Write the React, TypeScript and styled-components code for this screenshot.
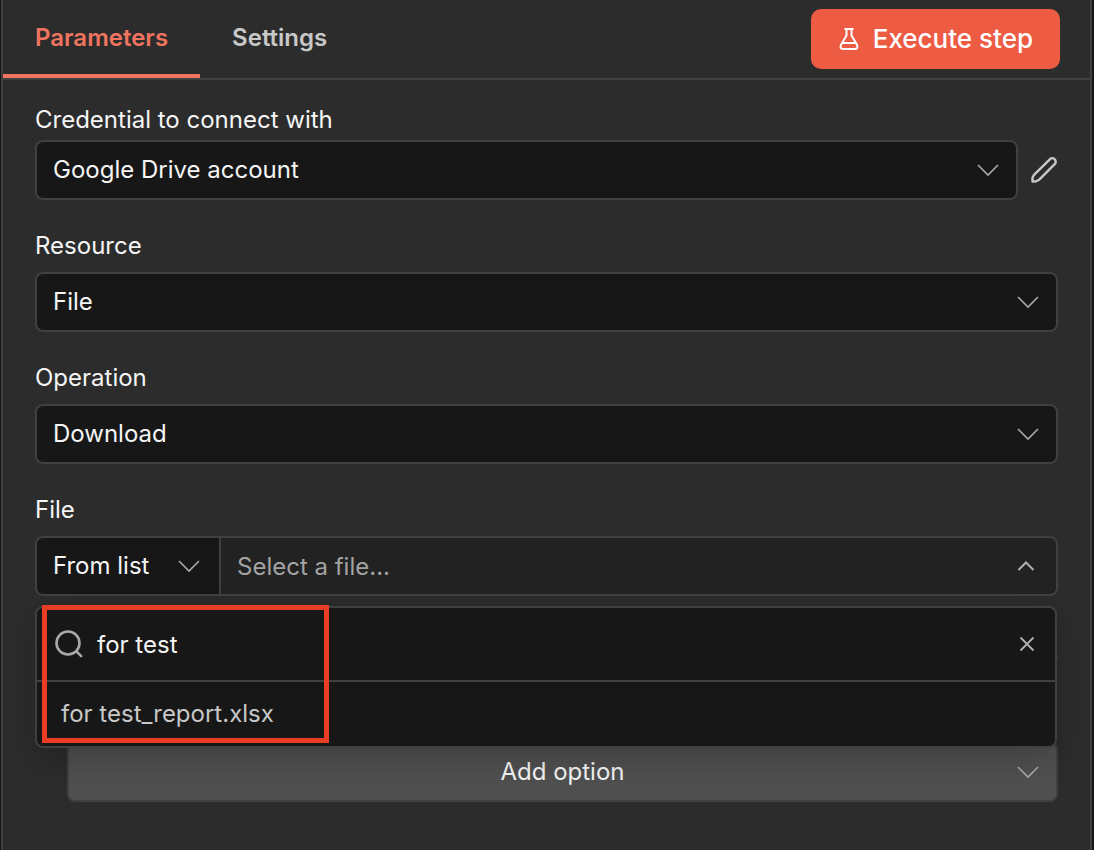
import React from "react";
import styled, { createGlobalStyle, css } from "styled-components";

const GlobalStyle = createGlobalStyle`
  *, *::before, *::after { box-sizing: border-box; }
  html, body, #root { height: 100%; }
  body {
    margin: 0;
    background: #171717;
    color: #f5f5f5;
    font-family: Inter, "Liberation Sans", sans-serif;
    font-size: 24px;
    line-height: 36px;
    overflow-x: hidden;
  }
  button, input, select { font: inherit; color: inherit; margin: 0; }
`;

const line = "#404040";

const Panel = styled.main`
  min-height: 100%;
  margin: 0 2px 0 1px;
  border: solid ${line};
  border-width: 0 2px;
  background: #2c2c2c;
`;

const TabBar = styled.header`
  display: flex;
  align-items: stretch;
  justify-content: space-between;
  height: 80px;
  border-bottom: 2px solid ${line};
`;

const Tabs = styled.nav`
  display: flex;
`;

const Tab = styled.button<{ $active?: boolean }>`
  padding: 2px 32px 0;
  border: 0;
  border-bottom: 4px solid ${(p) => (p.$active ? "#f0745f" : "transparent")};
  background: none;
  color: ${(p) => (p.$active ? "#f0745f" : "#c8c8c8")};
  font-weight: 600;
`;

const ExecuteButton = styled.button`
  display: flex;
  align-items: center;
  align-self: center;
  gap: 12px;
  height: 60px;
  margin-right: 30px;
  padding: 0 27px 0 26px;
  border: 0;
  border-radius: 10px;
  background: #ee5b43;
  color: #fff;
  font-size: 26px;
  font-weight: 500;
`;

const Form = styled.form`
  display: flex;
  flex-direction: column;
  gap: 28px;
  padding: 22px 32px 48px;
`;

const Field = styled.div<{ $tight?: boolean }>`
  display: flex;
  flex-direction: column;
  gap: ${(p) => (p.$tight ? 2 : 8)}px;
`;

const Label = styled.label`
  align-self: flex-start;
`;

const Row = styled.div`
  display: flex;
  align-items: center;
`;

const SelectWrap = styled.div`
  display: grid;
  flex: 1;
  align-items: center;

  > * { grid-area: 1 / 1; }
  > svg {
    justify-self: end;
    margin-right: 19px;
    pointer-events: none;
  }
`;

const control = css`
  height: 60px;
  border: 2px solid ${line};
  border-radius: 8px;
  background: #171717;
  outline: 0;
`;

const Select = styled.select`
  ${control}
  width: 100%;
  padding: 0 16px;
  appearance: none;
`;

const IconButton = styled.button`
  display: flex;
  padding: 0;
  border: 0;
  background: none;
  color: #c8c8c8;
`;

const EditButton = styled(IconButton)`
  margin-left: 12px;
`;

const Locator = styled.div`
  position: relative;
  display: flex;
`;

const ModeWrap = styled(SelectWrap)`
  flex: 0 0 184px;
`;

const ModeSelect = styled(Select)`
  border-right: 0;
  border-radius: 8px 0 0 8px;
`;

const FileBox = styled.div`
  ${control}
  display: flex;
  flex: 1;
  align-items: center;
  min-width: 0;
  padding-right: 21px;
  border-radius: 0 8px 8px 0;
  background: #222;
`;

const TextInput = styled.input`
  flex: 1;
  min-width: 0;
  padding: 2px 0 0;
  border: 0;
  outline: 0;
  background: none;

  &::placeholder { color: #a3a3a3; opacity: 1; }
`;

const FileInput = styled(TextInput)`
  padding-left: 16px;
`;

const Dropdown = styled.div`
  position: absolute;
  z-index: 1;
  top: 70px;
  left: 0;
  right: 1px;
  border: 2px solid ${line};
  border-radius: 8px;
  background: #171717;
  box-shadow: 0 12px 32px rgba(0, 0, 0, 0.2);
`;

const SearchRow = styled.div`
  display: flex;
  align-items: center;
  gap: 12px;
  height: 74px;
  padding: 0 20px 0 16px;
  border-bottom: 2px solid ${line};
`;

const Result = styled.button`
  display: block;
  width: 100%;
  height: 64px;
  padding: 0 24px;
  border: 0;
  background: none;
  color: #c8c8c8;
  text-align: left;
`;

const Highlight = styled.div`
  position: absolute;
  z-index: 2;
  top: 69px;
  left: 7px;
  width: 287px;
  height: 138px;
  border: 5px solid #ea3e24;
  pointer-events: none;
`;

const Options = styled.section`
  margin-top: 32px;
  padding: 84px 0 0 32px;
  border-top: 2px solid ${line};
`;

const OptionSelect = styled(Select)`
  background: #505050;
  text-align-last: center;
`;

type IconProps = { up?: boolean };

const Chevron = ({ up }: IconProps) =>
  up ? (
    <svg width="18" height="12" viewBox="0 0 18 12" fill="none" stroke="#b0b0b0" strokeWidth="2">
      <path d="M1.500 10 9 2.500 16.500 10" />
    </svg>
  ) : (
    <svg width="22" height="14" viewBox="0 0 22 14" fill="none" stroke="#a9a9a9" strokeWidth="1.600">
      <path d="M1 2 11 12 21 2" />
    </svg>
  );

const Flask = () => (
  <svg width="24" height="24" viewBox="0 0 24 24" fill="none" stroke="currentColor" strokeWidth="2">
    <path d="M7.500 2h9M9.500 2v6.500L4.200 17.500C2.800 20 3.500 22 6 22h12c2.500 0 3.200-2 1.800-4.500L14.500 8.500V2M6 16h12" />
  </svg>
);

const Pencil = () => (
  <svg width="28" height="28" viewBox="0 0 28 28" fill="none" stroke="currentColor" strokeWidth="2.400" strokeLinejoin="round">
    <path d="M2.500 25.500V21.800L4 18.800 19.800 3.300a3.300 3.300 0 0 1 4.900 4.900L9 23.800 6.200 25.300Z" />
  </svg>
);

const Search = () => (
  <svg width="32" height="32" viewBox="0 0 32 32" fill="none" stroke="#a9a9a9" strokeWidth="2.600" strokeLinecap="round">
    <circle cx="15" cy="15" r="11.500" />
    <path d="m23.200 23.200 5 5" />
  </svg>
);

const Close = () => (
  <svg width="16" height="16" viewBox="0 0 16 16" fill="none" stroke="#b0b0b0" strokeWidth="1.800">
    <path d="m1.500 1.500 13 13M14.500 1.500l-13 13" />
  </svg>
);

export default function App() {
  return (
    <>
      <GlobalStyle />
      <Panel>
        <TabBar>
          <Tabs>
            <Tab type="button" $active>Parameters</Tab>
            <Tab type="button">Settings</Tab>
          </Tabs>
          <ExecuteButton type="button">
            <Flask />
            Execute step
          </ExecuteButton>
        </TabBar>
        <Form onSubmit={(e) => e.preventDefault()}>
          <Field $tight>
            <Label htmlFor="credential">Credential to connect with</Label>
            <Row>
              <SelectWrap>
                <Select id="credential"><option>Google Drive account</option></Select>
                <Chevron />
              </SelectWrap>
              <EditButton type="button" aria-label="Edit credential"><Pencil /></EditButton>
            </Row>
          </Field>
          <Field>
            <Label htmlFor="resource">Resource</Label>
            <SelectWrap>
              <Select id="resource"><option>File</option></Select>
              <Chevron />
            </SelectWrap>
          </Field>
          <Field>
            <Label htmlFor="operation">Operation</Label>
            <SelectWrap>
              <Select id="operation"><option>Download</option></Select>
              <Chevron />
            </SelectWrap>
          </Field>
          <Field>
            <Label htmlFor="file">File</Label>
            <Locator>
              <ModeWrap>
                <ModeSelect aria-label="File mode"><option>From list</option></ModeSelect>
                <Chevron />
              </ModeWrap>
              <FileBox>
                <FileInput id="file" placeholder="Select a file..." readOnly />
                <IconButton type="button" aria-label="Close list"><Chevron up /></IconButton>
              </FileBox>
              <Dropdown>
                <SearchRow>
                  <Search />
                  <TextInput aria-label="Search files" defaultValue="for test" />
                  <IconButton type="button" aria-label="Clear search"><Close /></IconButton>
                </SearchRow>
                <Result type="button">for test_report.xlsx</Result>
              </Dropdown>
              <Highlight />
            </Locator>
          </Field>
          <Options>
            <SelectWrap>
              <OptionSelect aria-label="Add option"><option>Add option</option></OptionSelect>
              <Chevron />
            </SelectWrap>
          </Options>
        </Form>
      </Panel>
    </>
  );
}
